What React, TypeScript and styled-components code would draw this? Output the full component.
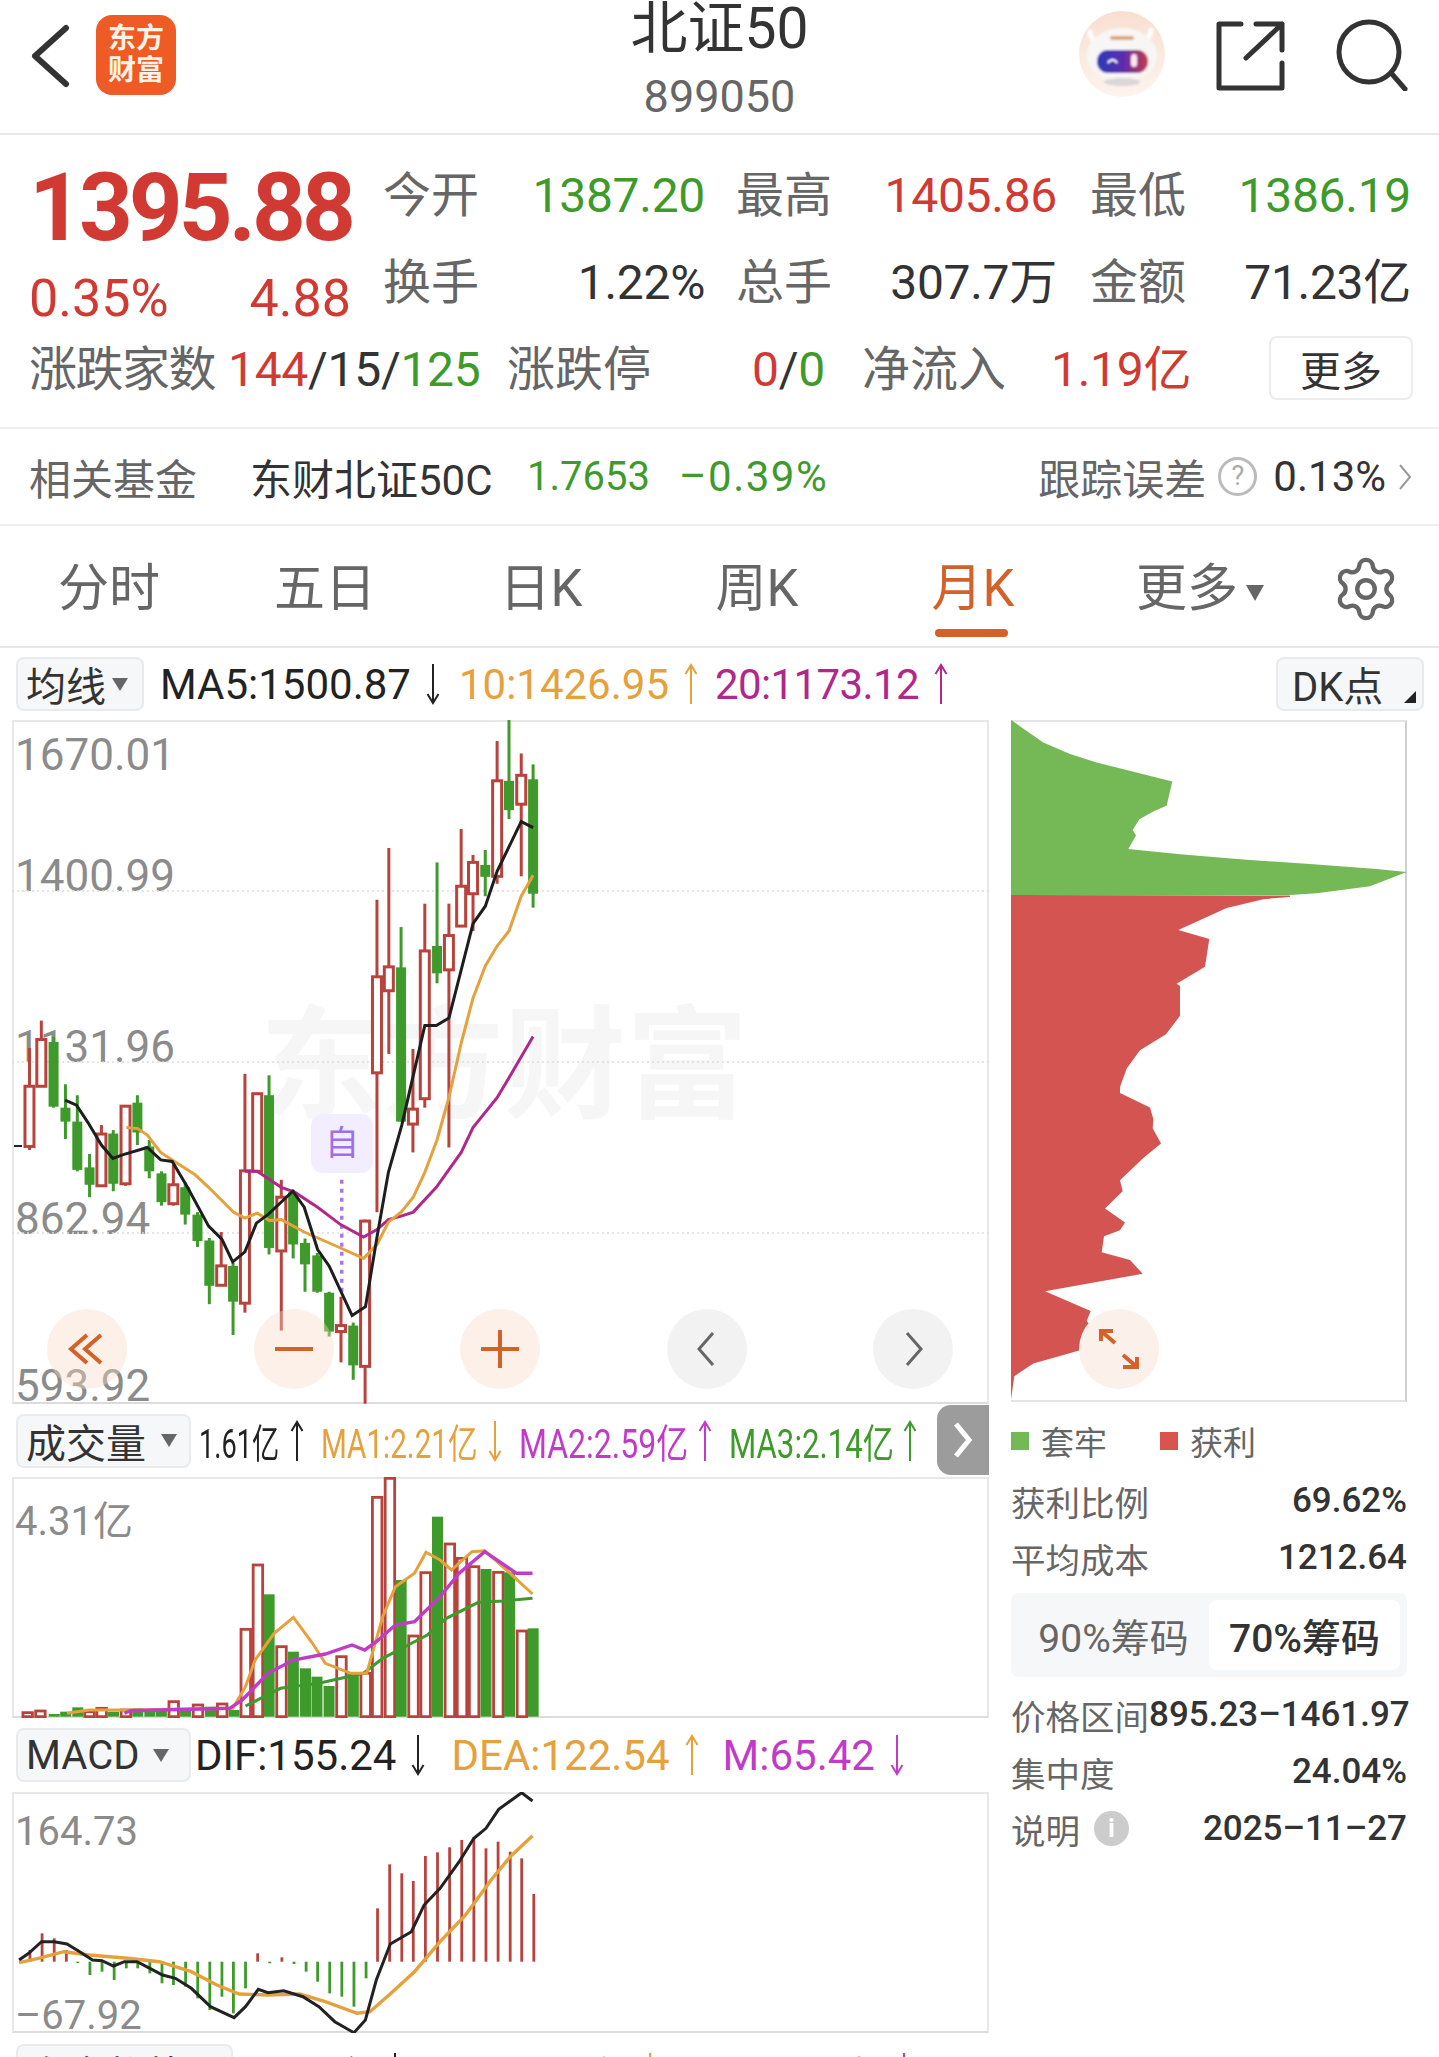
import React from "react";
import styled, { createGlobalStyle } from "styled-components";
import { Settings } from "lucide-react";

const RED = "#d13a33";
const GREEN = "#3f9a2c";
const CANDLE_RED = "#b8423c";
const ORANGE = "#e5a13c";
const MAGENTA = "#b0288a";
const VIOLET = "#c03cc8";
const FONT = `Roboto, "Noto Sans CJK SC", sans-serif`;

// [x, wickTop, wickBottom, bodyTop, bodyBottom, isRed]
const candles: [number, number, number, number, number, number][] = [
  [77, 820, 1025, 897, 1018, 1], [108, 765, 897, 803, 897, 1], [140, 798, 940, 808, 938, 0],
  [171, 893, 1003, 940, 968, 0], [202, 915, 1068, 968, 1065, 0], [234, 1033, 1120, 1060, 1095, 0],
  [265, 975, 1097, 993, 1097, 1], [296, 985, 1108, 992, 1093, 0], [328, 935, 1097, 937, 1093, 1],
  [359, 915, 1015, 930, 990, 0], [390, 1005, 1082, 1018, 1068, 0], [422, 1068, 1137, 1072, 1130, 0],
  [453, 1055, 1137, 1095, 1133, 1], [484, 1090, 1175, 1100, 1155, 0], [516, 1150, 1220, 1155, 1208, 0],
  [547, 1202, 1335, 1207, 1298, 0], [578, 1190, 1297, 1258, 1297, 1], [609, 1252, 1397, 1258, 1330, 0],
  [640, 872, 1352, 1067, 1333, 1], [672, 910, 1068, 912, 1068, 1], [703, 875, 1235, 915, 1222, 0],
  [735, 1085, 1388, 1120, 1228, 1], [766, 1105, 1243, 1110, 1215, 0], [797, 1203, 1310, 1212, 1255, 0],
  [829, 1232, 1312, 1237, 1310, 0], [860, 1310, 1400, 1312, 1390, 0], [891, 1320, 1452, 1378, 1390, 1],
  [923, 1372, 1487, 1378, 1458, 0], [954, 1165, 1535, 1168, 1460, 1], [985, 522, 1150, 677, 870, 1],
  [1016, 418, 832, 657, 705, 1], [1048, 577, 968, 658, 968, 0], [1079, 822, 1030, 943, 973, 1],
  [1110, 530, 940, 625, 922, 1], [1142, 447, 690, 615, 670, 0], [1173, 530, 1020, 594, 663, 1],
  [1205, 380, 577, 495, 575, 1], [1236, 432, 585, 447, 510, 1], [1268, 422, 515, 452, 476, 0],
  [1299, 203, 490, 283, 475, 1], [1330, 160, 360, 283, 342, 0], [1362, 228, 475, 272, 330, 1],
  [1393, 250, 538, 280, 510, 0],
];

const ma5 = [[170,925],[200,935],[230,970],[265,1015],[295,1042],[320,1035],[385,1020],[420,1045],[450,1048],[490,1100],[545,1178],[580,1205],[608,1250],[640,1230],[670,1172],[700,1155],[765,1108],[795,1140],[830,1225],[860,1258],[920,1358],[955,1340],[985,1200],[1015,1070],[1050,975],[1110,775],[1140,775],[1173,760],[1236,570],[1268,535],[1299,465],[1362,365],[1393,377]];
const ma10 = [[330,980],[360,982],[385,995],[420,1030],[460,1050],[510,1075],[545,1100],[610,1150],[640,1162],[672,1152],[705,1167],[735,1165],[795,1190],[890,1222],[950,1243],[985,1215],[1015,1170],[1048,1150],[1080,1120],[1110,1070],[1142,1005],[1173,920],[1205,810],[1236,720],[1268,655],[1299,615],[1330,585],[1362,515],[1393,473]];
const ma20 = [[640,1068],[672,1068],[735,1100],[770,1110],[830,1140],[890,1175],[950,1200],[985,1185],[1015,1165],[1048,1158],[1080,1150],[1140,1100],[1205,1030],[1236,980],[1299,920],[1330,880],[1393,797]];

// [x, top, isRed]
const volBars: [number, number, number][] = [
  [43,938,1],[63,933,1],[85,942,0],[103,935,0],[122,922,0],[140,935,1],[159,925,1],[178,935,0],[197,930,1],
  [216,925,0],[235,930,0],[253,930,0],[272,905,1],[291,925,0],[310,915,1],[330,920,0],[348,912,1],[367,930,0],
  [385,688,1],[404,495,1],[422,583,0],[441,740,1],[460,755,0],[479,805,0],[497,830,0],[516,858,0],[535,770,1],
  [554,820,0],[573,820,1],[591,292,1],[611,235,1],[629,540,0],[648,708,1],[667,518,1],[686,350,0],[705,432,1],
  [724,475,1],[743,500,1],[762,507,0],[781,517,1],[799,517,0],[818,693,1],[836,685,0],
];
const volMa1 = [[105,940],[140,930],[200,930],[365,925],[385,860],[400,780],[430,700],[460,652],[490,730],[510,790],[550,820],[575,820],[600,650],[620,560],[650,520],[668,457],[690,480],[708,510],[740,455],[760,452],[800,520],[835,582]];
const volMa2 = [[195,940],[205,932],[360,925],[380,900],[420,820],[460,780],[510,762],[552,735],[572,750],[590,725],[620,675],[650,665],[690,590],[720,520],[760,455],[810,520],[835,520]];
const volMa3 = [[385,918],[440,865],[500,850],[570,820],[600,775],[640,735],[670,705],[700,655],[750,607],[790,603],[835,595]];

// [x, tip]; above the 725 baseline is red, below is green
const macdBars = [[47,690],[66,640],[85,655],[104,690],[122,729],[141,765],[160,755],[179,780],[198,745],[216,745],[235,760],[254,790],[272,795],[291,800],[310,835],[329,870],[348,830],[366,880],[385,805],[404,700],[423,730],[442,712],[461,732],[480,755],[498,785],[517,820],[536,830],[555,860],[574,775],[592,565],[611,433],[630,460],[648,483],[667,408],[686,397],[705,382],[724,360],[743,352],[762,385],[781,365],[800,395],[818,415],[837,522]];
const dif = [[30,720],[45,700],[65,665],[85,665],[105,672],[125,695],[145,720],[160,722],[178,738],[195,725],[215,725],[235,745],[255,765],[275,775],[300,805],[330,860],[367,893],[385,860],[405,808],[420,818],[445,812],[475,830],[500,860],[525,905],[555,938],[573,900],[590,780],[612,672],[645,635],[665,555],[690,505],[720,425],[743,355],[762,325],[782,268],[818,218],[835,243]];
const dea = [[30,728],[60,715],[100,695],[140,705],[200,715],[250,725],[300,755],[340,795],[375,822],[420,825],[470,822],[510,845],[560,880],[580,875],[610,825],[650,755],[690,665],[730,585],[770,480],[800,410],[835,347]];

const profileGreen = [[92,45],[190,95],[270,120],[350,138],[577,180],[560,232],[520,245],[478,262],[458,285],[468,297],[445,327],[600,338],[800,350],[1000,360],[1190,370],[1280,377],[1170,408],[1010,423],[930,427],[92,427]];
const profileRed = [[92,427],[930,428],[930,431],[850,436],[740,455],[595,503],[688,523],[675,583],[590,620],[600,625],[600,690],[558,730],[480,765],[440,805],[420,845],[420,858],[510,890],[520,915],[518,935],[543,968],[490,1000],[420,1048],[428,1072],[375,1110],[435,1140],[420,1157],[372,1170],[365,1205],[450,1222],[488,1252],[195,1290],[332,1333],[320,1355],[345,1378],[305,1395],[303,1418],[160,1447],[103,1475],[92,1530]];

const mainX = (z: number) => z / 2.613 - 12;
const mainY = (z: number) => z / 2.01 - 80;
const lowX = (z: number) => z / 1.568 - 12;
const volY = (z: number) => z / 3 - 77;
const macdY = (z: number) => z / 3 - 72;
const profX = (z: number) => z / 3 - 31;
const profY = (z: number) => z / 2.178 - 21;

const toPoints = (pts: number[][], fx: (n: number) => number, fy: (n: number) => number) =>
  pts.map(([x, y]) => `${fx(x).toFixed(1)},${fy(y).toFixed(1)}`).join(" ");

const GlobalStyle = createGlobalStyle`
  html, body {
    margin: 0;
    padding: 0;
    background: #fff;
  }
  * {
    box-sizing: border-box;
  }
`;

const Page = styled.div`
  width: 1439px;
  height: 2057px;
  overflow: hidden;
  background: #fff;
  color: #333;
  font-family: ${FONT};
`;

const Header = styled.header`
  height: 135px;
  display: grid;
  grid-template-columns: 1fr auto 1fr;
  border-bottom: 2px solid #e8e8e8;
`;

const HeaderLeft = styled.div`
  display: flex;
  align-items: flex-start;
  padding: 15px 0 0 30px;
  gap: 26px;
`;

const Logo = styled.div`
  width: 80px;
  height: 80px;
  border-radius: 16px;
  background: #ee5b25;
  color: #fff3e8;
  font-size: 28px;
  font-weight: 700;
  line-height: 32px;
  text-align: center;
  padding-top: 8px;
`;

const TitleBlock = styled.div`
  display: flex;
  flex-direction: column;
  align-items: center;
  padding-top: 2px;
`;

const Title = styled.div`
  font-size: 57px;
  line-height: 54px;
  color: #333;
`;

const Code = styled.div`
  margin-top: 21px;
  font-size: 45px;
  line-height: 40px;
  color: #666;
`;

const HeaderRight = styled.div`
  display: flex;
  justify-content: flex-end;
  align-items: flex-start;
  padding: 10px 31px 0 0;
  gap: 50px;
`;

const IconSlot = styled.div<{ $top: number }>`
  margin-top: ${(p) => p.$top}px;
  line-height: 0;
`;

const Quote = styled.section`
  height: 294px;
  padding-top: 17px;
  border-bottom: 2px solid #efefef;
`;

const QuoteTop = styled.div`
  height: 174px;
  display: grid;
  grid-template-columns: 383px 322px 31px 321px 33px 321px;
  grid-template-rows: 87px 87px;
  align-items: center;
`;

const PriceBlock = styled.div`
  grid-row: 1 / 3;
  grid-column: 1;
  padding-left: 29px;
  align-self: start;
`;

const Price = styled.div`
  font-size: 94px;
  line-height: 112px;
  font-weight: 700;
  letter-spacing: -4px;
  color: ${RED};
`;

const Change = styled.div`
  width: 322px;
  display: flex;
  justify-content: space-between;
  font-size: 52px;
  line-height: 70px;
  color: ${RED};
`;

const Stat = styled.div`
  display: flex;
  justify-content: space-between;
  align-items: center;
`;

const Label = styled.span`
  font-size: 48px;
  line-height: 56px;
  color: #666;
  white-space: nowrap;
`;

const TightLabel = styled(Label)`
  letter-spacing: -1.5px;
`;

const Value = styled.span<{ $color?: string }>`
  font-size: 48px;
  line-height: 56px;
  letter-spacing: -0.3px;
  white-space: nowrap;
  color: ${(p) => p.$color || "#333"};
`;

const QuoteBottom = styled.div`
  height: 87px;
  padding-left: 29px;
  display: grid;
  grid-template-columns: 199px 279px 245px 110px 189px 218px 144px;
  align-items: center;
`;

const MoreButton = styled.div`
  height: 64px;
  margin-top: -4px;
  border: 2px solid #ececec;
  border-radius: 8px;
  display: flex;
  align-items: center;
  justify-content: center;
  font-size: 41px;
  color: #333;
`;

const FundRow = styled.section`
  height: 97px;
  padding-left: 29px;
  display: grid;
  grid-template-columns: 221px 277px 152px 1fr auto;
  align-items: center;
  border-bottom: 2px solid #efefef;
  font-size: 42px;
`;

const FundLabel = styled.span`
  color: #666;
  white-space: nowrap;
`;

const FundName = styled.span`
  color: #333;
  white-space: nowrap;
`;

const FundNum = styled.span<{ $color: string; $wide?: boolean }>`
  color: ${(p) => p.$color};
  font-size: ${(p) => (p.$wide ? 42 : 40)}px;
  letter-spacing: ${(p) => (p.$wide ? 1.5 : 0)}px;
  white-space: nowrap;
`;

const FundRight = styled.div`
  display: flex;
  align-items: center;
  padding-right: 27px;
`;

const HelpCircle = styled.span`
  width: 39px;
  height: 39px;
  margin: 0 16px 0 12px;
  border: 3px solid #bbb;
  border-radius: 50%;
  color: #aaa;
  font-size: 27px;
  line-height: 33px;
  text-align: center;
`;

const Tabs = styled.nav`
  height: 122px;
  padding: 6px 0 0 1px;
  display: grid;
  grid-template-columns: repeat(6, 216px) 1fr;
  align-items: center;
  border-bottom: 2px solid #e8e8e8;
`;

const Tab = styled.div<{ $active?: boolean; $shift?: number }>`
  position: relative;
  justify-self: center;
  margin-left: ${(p) => p.$shift || 0}px;
  font-size: 51px;
  line-height: 60px;
  white-space: nowrap;
  color: ${(p) => (p.$active ? "#d2622a" : "#666")};
  &::after {
    content: "";
    display: ${(p) => (p.$active ? "block" : "none")};
    position: absolute;
    left: 3px;
    right: 7px;
    top: 70px;
    height: 8px;
    border-radius: 4px;
    background: #d2622a;
  }
`;

const TabCaret = styled.span`
  display: inline-block;
  margin-left: 8px;
  vertical-align: middle;
  border-left: 9px solid transparent;
  border-right: 9px solid transparent;
  border-top: 16px solid #666;
`;

const GearSlot = styled.div`
  justify-self: center;
  line-height: 0;
  margin-left: -4px;
`;

const MaRow = styled.div`
  height: 72px;
  padding-left: 16px;
  display: flex;
  align-items: center;
  font-size: 42px;
`;

const DropButton = styled.div<{ $w: number; $h?: number }>`
  flex: none;
  width: ${(p) => p.$w}px;
  height: ${(p) => p.$h || 54}px;
  padding-left: 8px;
  display: flex;
  align-items: center;
  gap: 6px;
  background: #f6f7f9;
  border: 2px solid #e9eaec;
  border-radius: 8px;
  font-size: 40px;
  color: #333;
  white-space: nowrap;
`;

const SmallCaret = styled.span<{ $push?: number }>`
  margin-left: ${(p) => p.$push || 0}px;
  border-left: 8px solid transparent;
  border-right: 8px solid transparent;
  border-top: 13px solid #666;
`;

const DkButton = styled(DropButton)`
  position: relative;
  margin-left: auto;
  margin-right: 15px;
  padding-left: 14px;
  &::after {
    content: "";
    position: absolute;
    right: 6px;
    bottom: 6px;
    border-left: 12px solid transparent;
    border-bottom: 12px solid #222;
  }
`;

const MaText = styled.span<{ $color?: string; $gap?: number; $tight?: number }>`
  flex: none;
  display: flex;
  align-items: center;
  margin-left: ${(p) => p.$gap ?? 18}px;
  letter-spacing: ${(p) => p.$tight || 0}px;
  color: ${(p) => p.$color || "#222"};
  white-space: nowrap;
`;

const ChartArea = styled.div`
  display: grid;
  grid-template-columns: 989px 1fr;
`;

const LeftCol = styled.div`
  padding-left: 12px;
`;

const Frame = styled.div<{ $h: number }>`
  position: relative;
  width: 977px;
  height: ${(p) => p.$h}px;
  border: 2px solid #e8e8e8;
  border-bottom-color: #dcdcdc;
`;

const FrameSvg = styled.svg`
  position: absolute;
  left: -2px;
  top: -2px;
  z-index: 2;
`;

const AxisLabel = styled.span<{ $top: number; $size?: number }>`
  position: absolute;
  left: 1px;
  top: ${(p) => p.$top}px;
  z-index: 1;
  font-size: ${(p) => p.$size || 44}px;
  line-height: 44px;
  color: #8b8b8b;
  white-space: nowrap;
`;

const Watermark = styled.div`
  position: absolute;
  left: 246px;
  top: 280px;
  font-size: 122px;
  line-height: 130px;
  font-weight: 700;
  color: #f6f6f6;
  white-space: nowrap;
`;

const SelfBadge = styled.div`
  position: absolute;
  left: 297px;
  top: 392px;
  z-index: 3;
  width: 62px;
  height: 59px;
  border-radius: 12px;
  background: #f3eeff;
  color: #a06ee8;
  font-size: 34px;
  line-height: 59px;
  text-align: center;
`;

const ControlBar = styled.div`
  position: absolute;
  left: 33px;
  top: 587px;
  z-index: 3;
  display: flex;
  gap: 126.5px;
`;

const RoundButton = styled.div<{ $gray?: boolean }>`
  width: 80px;
  height: 80px;
  border-radius: 50%;
  display: flex;
  align-items: center;
  justify-content: center;
  background: ${(p) => (p.$gray ? "rgba(232, 232, 232, 0.55)" : "rgba(247, 218, 198, 0.4)")};
`;

const ExpandButton = styled(RoundButton)`
  position: absolute;
  left: 68px;
  top: 587px;
  background: #fbf0ea;
`;

const SubRow = styled.div<{ $h: number }>`
  position: relative;
  height: ${(p) => p.$h}px;
  padding-left: 4px;
  display: flex;
  align-items: center;
  font-size: 42px;
`;

const Squeezed = styled.span<{ $w: number; $gap: number; $color?: string }>`
  flex: none;
  display: flex;
  align-items: center;
  width: ${(p) => p.$w}px;
  margin-left: ${(p) => p.$gap}px;
  font-size: 40px;
  color: ${(p) => p.$color || "#222"};
  white-space: nowrap;
`;

const SqueezeInner = styled.span<{ $s: number }>`
  display: inline-block;
  transform: scaleX(${(p) => p.$s});
  transform-origin: left center;
`;

const MoreTab = styled.div`
  position: absolute;
  right: 0;
  top: 1px;
  width: 52px;
  height: 70px;
  border-radius: 14px 0 0 14px;
  background: #9c9c9c;
  display: flex;
  align-items: center;
  justify-content: center;
`;

const RightCol = styled.aside`
  padding-left: 22px;
  width: 418px;
`;

const ProfileBox = styled.div`
  position: relative;
  width: 396px;
  height: 682px;
  border: 2px solid #e4e4e4;
  border-left: 0;
  border-right-color: #cfcfcf;
`;

const ProfileSvg = styled.svg`
  position: absolute;
  left: 0;
  top: -2px;
`;

const Legend = styled.div`
  margin-top: 7px;
  height: 63px;
  display: flex;
  align-items: center;
  font-size: 33px;
  color: #666;
`;

const LegendDot = styled.span<{ $color: string; $gap?: number }>`
  width: 18px;
  height: 18px;
  margin-left: ${(p) => p.$gap || 0}px;
  margin-right: 12px;
  background: ${(p) => p.$color};
`;

const InfoRow = styled.div`
  height: 57px;
  display: flex;
  align-items: center;
  justify-content: space-between;
  width: 396px;
`;

const InfoLabel = styled.span`
  display: flex;
  align-items: center;
  font-size: 34.5px;
  color: #666;
  white-space: nowrap;
`;

const InfoValue = styled.span`
  font-size: 35px;
  font-weight: 500;
  color: #333;
  white-space: nowrap;
`;

const Toggle = styled.div`
  width: 396px;
  height: 84px;
  margin: 7px 0 9px;
  padding: 7px;
  display: grid;
  grid-template-columns: 1fr 191px;
  background: #f6f7f9;
  border-radius: 8px;
  font-size: 39px;
`;

const ToggleItem = styled.div<{ $active?: boolean }>`
  display: flex;
  align-items: center;
  justify-content: center;
  border-radius: 8px;
  background: ${(p) => (p.$active ? "#fff" : "transparent")};
  color: ${(p) => (p.$active ? "#333" : "#666")};
  font-weight: ${(p) => (p.$active ? 500 : 400)};
`;

const InfoDot = styled.span`
  width: 35px;
  height: 35px;
  margin-left: 14px;
  border-radius: 50%;
  background: #ccc;
  color: #fff;
  font-size: 26px;
  font-weight: 700;
  line-height: 35px;
  text-align: center;
`;

const ArrowSvg = styled.svg`
  display: block;
  flex: none;
`;

const Arrow = ({ up, color = "#222" }: { up?: boolean; color?: string }) => (
  <ArrowSvg width="16" height="44" viewBox="0 0 16 44">
    {up ? (
      <path d="M8 42V3M2.5 12L8 3l5.5 9" fill="none" stroke={color} strokeWidth="2" />
    ) : (
      <path d="M8 2v39M2.5 32L8 41l5.5-9" fill="none" stroke={color} strokeWidth="2" />
    )}
  </ArrowSvg>
);

const Robot = () => (
  <svg width="88" height="88" viewBox="0 0 88 88">
    <defs>
      <linearGradient id="visor" x1="0" x2="1" y1="0" y2="0">
        <stop offset="0" stopColor="#2a3db8" />
        <stop offset="0.5" stopColor="#5c2cb0" />
        <stop offset="1" stopColor="#c63a4c" />
      </linearGradient>
      <linearGradient id="halo" x1="0" x2="0" y1="0" y2="1">
        <stop offset="0" stopColor="#f8dfd0" />
        <stop offset="1" stopColor="#fdf4ee" />
      </linearGradient>
      <filter id="soft">
        <feGaussianBlur stdDeviation="0.8" />
      </filter>
    </defs>
    <circle cx="44" cy="44" r="43" fill="url(#halo)" />
    <g filter="url(#soft)">
      <path d="M12 22c1 7 4 11 10 13M73 20c-1 7-4 11-10 13" fill="none" stroke="#fff" strokeWidth="5" strokeLinecap="round" />
      <ellipse cx="44" cy="45" rx="35" ry="27" fill="#f8f6f5" />
      <ellipse cx="44" cy="72" rx="18" ry="4" fill="#dad7d5" />
      <rect x="32" y="26" width="24" height="4" rx="2" fill="#dca67c" />
      <rect x="19" y="40" width="51" height="23" rx="11" fill="url(#visor)" />
      <path d="M30 53c2-4 7-4 9 0" fill="none" stroke="#fff" strokeWidth="2" />
      <rect x="53" y="44" width="6" height="13" rx="3" fill="#ffe6ee" />
    </g>
  </svg>
);

const Candles = () => (
  <FrameSvg width="977" height="684">
    <g stroke="#ddd" strokeWidth="1.5" strokeDasharray="2 3">
      <line x1="0" x2="977" y1="171" y2="171" />
      <line x1="0" x2="977" y1="342" y2="342" />
      <line x1="0" x2="977" y1="513" y2="513" />
    </g>
    <line x1="2" x2="10" y1="426" y2="426" stroke="#222" strokeWidth="2" />
    {candles.map(([x, wt, wb, bt, bb, red]) => {
      const color = red ? CANDLE_RED : GREEN;
      const cx = mainX(x);
      return (
        <g key={x}>
          <line x1={cx} x2={cx} y1={mainY(wt)} y2={mainY(wb)} stroke={color} strokeWidth="3" />
          {red ? (
            <rect x={cx - 4.5} y={mainY(bt)} width="9" height={Math.max(mainY(bb) - mainY(bt), 2)} fill="#fff" stroke={color} strokeWidth="3" />
          ) : (
            <rect x={cx - 5} y={mainY(bt)} width="10" height={mainY(bb) - mainY(bt)} fill={color} />
          )}
        </g>
      );
    })}
    <line x1={mainX(893)} x2={mainX(893)} y1={mainY(1085)} y2={mainY(1320)} stroke="#a878ea" strokeWidth="3.5" strokeDasharray="4 5" />
    <polyline points={toPoints(ma20, mainX, mainY)} fill="none" stroke={MAGENTA} strokeWidth="3" />
    <polyline points={toPoints(ma10, mainX, mainY)} fill="none" stroke={ORANGE} strokeWidth="3" />
    <polyline points={toPoints(ma5, mainX, mainY)} fill="none" stroke="#1e1e1e" strokeWidth="3" />
  </FrameSvg>
);

const Volume = () => (
  <FrameSvg width="977" height="241">
    {volBars.map(([x, top, red]) => {
      const cx = lowX(x);
      const y = volY(top);
      const bottom = volY(950);
      return red ? (
        <rect key={x} x={cx - 4.5} y={y} width="9.5" height={bottom - y} fill="#fff" stroke={CANDLE_RED} strokeWidth="2.8" />
      ) : (
        <rect key={x} x={cx - 5.5} y={y} width="11" height={bottom - y} fill={GREEN} />
      );
    })}
    <polyline points={toPoints(volMa3, lowX, volY)} fill="none" stroke={GREEN} strokeWidth="3" />
    <polyline points={toPoints(volMa1, lowX, volY)} fill="none" stroke={ORANGE} strokeWidth="3" />
    <polyline points={toPoints(volMa2, lowX, volY)} fill="none" stroke={VIOLET} strokeWidth="3.4" />
  </FrameSvg>
);

const Macd = () => (
  <FrameSvg width="977" height="241">
    {macdBars.map(([x, tip]) => (
      <line key={x} x1={lowX(x)} x2={lowX(x)} y1={macdY(725)} y2={macdY(tip)} stroke={tip < 725 ? CANDLE_RED : GREEN} strokeWidth="2.8" />
    ))}
    <polyline points={toPoints(dea, lowX, macdY)} fill="none" stroke={ORANGE} strokeWidth="3.4" />
    <polyline points={toPoints(dif, lowX, macdY)} fill="none" stroke="#222" strokeWidth="3" />
  </FrameSvg>
);

const OrangeIcon = ({ d }: { d: string }) => (
  <svg width="44" height="44" viewBox="0 0 44 44">
    <path d={d} fill="none" stroke="#d2622a" strokeWidth="4" />
  </svg>
);

export default function App() {
  return (
    <Page>
      <GlobalStyle />
      <Header>
        <HeaderLeft>
          <IconSlot $top={8}>
            <svg width="40" height="66" viewBox="0 0 40 66">
              <path d="M36 5L5 33l31 28" fill="none" stroke="#333" strokeWidth="6" strokeLinecap="round" strokeLinejoin="round" />
            </svg>
          </IconSlot>
          <Logo>
            东方
            <br />
            财富
          </Logo>
        </HeaderLeft>
        <TitleBlock>
          <Title>北证50</Title>
          <Code>899050</Code>
        </TitleBlock>
        <HeaderRight>
          <Robot />
          <IconSlot $top={11}>
            <svg width="70" height="70" viewBox="0 0 70 70">
              <path d="M25 3H3v64h63V42M30 37L66 3M40 3h26v26" fill="none" stroke="#333" strokeWidth="5" strokeLinecap="round" strokeLinejoin="round" />
            </svg>
          </IconSlot>
          <IconSlot $top={9}>
            <svg width="72" height="72" viewBox="0 0 72 72">
              <circle cx="33" cy="33" r="30" fill="none" stroke="#333" strokeWidth="5" />
              <path d="M56 55l13 15" fill="none" stroke="#333" strokeWidth="5" strokeLinecap="round" />
            </svg>
          </IconSlot>
        </HeaderRight>
      </Header>

      <Quote>
        <QuoteTop>
          <PriceBlock>
            <Price>1395.88</Price>
            <Change>
              <span>0.35%</span>
              <span>4.88</span>
            </Change>
          </PriceBlock>
          <Stat style={{ gridColumn: 2 }}>
            <Label>今开</Label>
            <Value $color={GREEN}>1387.20</Value>
          </Stat>
          <Stat style={{ gridColumn: 4 }}>
            <Label>最高</Label>
            <Value $color={RED}>1405.86</Value>
          </Stat>
          <Stat style={{ gridColumn: 6 }}>
            <Label>最低</Label>
            <Value $color={GREEN}>1386.19</Value>
          </Stat>
          <Stat style={{ gridColumn: 2 }}>
            <Label>换手</Label>
            <Value>1.22%</Value>
          </Stat>
          <Stat style={{ gridColumn: 4 }}>
            <Label>总手</Label>
            <Value>307.7万</Value>
          </Stat>
          <Stat style={{ gridColumn: 6 }}>
            <Label>金额</Label>
            <Value>71.23亿</Value>
          </Stat>
        </QuoteTop>
        <QuoteBottom>
          <TightLabel>涨跌家数</TightLabel>
          <Value>
            <Value $color={RED}>144</Value>/15/<Value $color={GREEN}>125</Value>
          </Value>
          <Label>涨跌停</Label>
          <Value>
            <Value $color={RED}>0</Value>/<Value $color={GREEN}>0</Value>
          </Value>
          <Label>净流入</Label>
          <Value $color={RED}>1.19亿</Value>
          <MoreButton>更多</MoreButton>
        </QuoteBottom>
      </Quote>

      <FundRow>
        <FundLabel>相关基金</FundLabel>
        <FundName>东财北证50C</FundName>
        <FundNum $color={GREEN}>1.7653</FundNum>
        <FundNum $color={GREEN} $wide>
          –0.39%
        </FundNum>
        <FundRight>
          <FundLabel>跟踪误差</FundLabel>
          <HelpCircle>?</HelpCircle>
          <FundName>0.13%</FundName>
          <svg width="14" height="30" viewBox="0 0 14 30" style={{ marginLeft: 12 }}>
            <path d="M2 3l10 12L2 27" fill="none" stroke="#999" strokeWidth="2" />
          </svg>
        </FundRight>
      </FundRow>

      <Tabs>
        <Tab>分时</Tab>
        <Tab>五日</Tab>
        <Tab>日K</Tab>
        <Tab>周K</Tab>
        <Tab $active>月K</Tab>
        <Tab $shift={22}>
          更多
          <TabCaret />
        </Tab>
        <GearSlot>
          <Settings size={70} color="#666" strokeWidth={1.5} />
        </GearSlot>
      </Tabs>

      <MaRow>
        <DropButton $w={128}>
          均线
          <SmallCaret />
        </DropButton>
        <MaText $gap={16}>MA5:1500.87</MaText>
        <MaText $gap={14}>
          <Arrow />
        </MaText>
        <MaText $color={ORANGE} $gap={18}>10:1426.95</MaText>
        <MaText $gap={14}>
          <Arrow up color={ORANGE} />
        </MaText>
        <MaText $color={MAGENTA} $gap={16} $tight={-0.6}>20:1173.12</MaText>
        <MaText $gap={14}>
          <Arrow up color={MAGENTA} />
        </MaText>
        <DkButton $w={148}>DK点</DkButton>
      </MaRow>

      <ChartArea>
        <LeftCol>
          <Frame $h={684}>
            <Watermark>东方财富</Watermark>
            <AxisLabel $top={11}>1670.01</AxisLabel>
            <AxisLabel $top={132}>1400.99</AxisLabel>
            <AxisLabel $top={303}>1131.96</AxisLabel>
            <AxisLabel $top={475}>862.94</AxisLabel>
            <AxisLabel $top={642}>593.92</AxisLabel>
            <Candles />
            <SelfBadge>自</SelfBadge>
            <ControlBar>
              <RoundButton>
                <OrangeIcon d="M22 8L6 22l16 14M36 8L20 22l16 14" />
              </RoundButton>
              <RoundButton>
                <OrangeIcon d="M3 22h38" />
              </RoundButton>
              <RoundButton>
                <OrangeIcon d="M3 22h38M22 3v38" />
              </RoundButton>
              <RoundButton $gray>
                <svg width="44" height="44" viewBox="0 0 44 44">
                  <path d="M28 6L14 22l14 16" fill="none" stroke="#666" strokeWidth="3" />
                </svg>
              </RoundButton>
              <RoundButton $gray>
                <svg width="44" height="44" viewBox="0 0 44 44">
                  <path d="M16 6l14 16-14 16" fill="none" stroke="#666" strokeWidth="3" />
                </svg>
              </RoundButton>
            </ControlBar>
          </Frame>

          <SubRow $h={73}>
            <DropButton $w={175}>
              成交量
              <SmallCaret $push={9} />
            </DropButton>
            <Squeezed $w={78} $gap={8}>
              <SqueezeInner $s={0.68}>1.61亿</SqueezeInner>
            </Squeezed>
            <Squeezed $w={16} $gap={12}>
              <Arrow up />
            </Squeezed>
            <Squeezed $w={155} $gap={16} $color={ORANGE}>
              <SqueezeInner $s={0.74}>MA1:2.21亿</SqueezeInner>
            </Squeezed>
            <Squeezed $w={16} $gap={11} $color={ORANGE}>
              <Arrow color={ORANGE} />
            </Squeezed>
            <Squeezed $w={166} $gap={16} $color={VIOLET}>
              <SqueezeInner $s={0.8}>MA2:2.59亿</SqueezeInner>
            </Squeezed>
            <Squeezed $w={16} $gap={12}>
              <Arrow up color={VIOLET} />
            </Squeezed>
            <Squeezed $w={163} $gap={16} $color={GREEN}>
              <SqueezeInner $s={0.78}>MA3:2.14亿</SqueezeInner>
            </Squeezed>
            <Squeezed $w={16} $gap={10}>
              <Arrow up color={GREEN} />
            </Squeezed>
            <MoreTab>
              <svg width="24" height="40" viewBox="0 0 24 40">
                <path d="M5 4l13 16L5 36" fill="none" stroke="#fff" strokeWidth="5" />
              </svg>
            </MoreTab>
          </SubRow>

          <Frame $h={241}>
            <AxisLabel $top={21} $size={40}>4.31亿</AxisLabel>
            <Volume />
          </Frame>

          <SubRow $h={74}>
            <DropButton $w={175}>
              MACD
              <SmallCaret $push={8} />
            </DropButton>
            <MaText $gap={4}>DIF:155.24</MaText>
            <MaText $gap={14}>
              <Arrow />
            </MaText>
            <MaText $color={ORANGE} $gap={25}>DEA:122.54</MaText>
            <MaText $gap={14}>
              <Arrow up color={ORANGE} />
            </MaText>
            <MaText $color={VIOLET} $gap={23}>M:65.42</MaText>
            <MaText $gap={14}>
              <Arrow color={VIOLET} />
            </MaText>
          </SubRow>

          <Frame $h={241}>
            <AxisLabel $top={16} $size={40}>164.73</AxisLabel>
            <AxisLabel $top={200} $size={40}>–67.92</AxisLabel>
            <Macd />
          </Frame>

          <SubRow $h={80}>
            <DropButton $w={217} $h={58}>资金趋势</DropButton>
            <Squeezed $w={108} $gap={32}>
              <SqueezeInner $s={0.77}>40.30亿</SqueezeInner>
            </Squeezed>
            <Squeezed $w={16} $gap={14}>
              <Arrow />
            </Squeezed>
            <Squeezed $w={207} $gap={21} $color={ORANGE}>
              <SqueezeInner $s={0.83}>MA1:-30.75亿</SqueezeInner>
            </Squeezed>
            <Squeezed $w={16} $gap={11}>
              <Arrow color={ORANGE} />
            </Squeezed>
            <Squeezed $w={207} $gap={21} $color={VIOLET}>
              <SqueezeInner $s={0.83}>MA2:-13.41亿</SqueezeInner>
            </Squeezed>
            <Squeezed $w={16} $gap={10}>
              <Arrow color={VIOLET} />
            </Squeezed>
          </SubRow>
        </LeftCol>

        <RightCol>
          <ProfileBox>
            <ProfileSvg width="396" height="684">
              <polygon points={toPoints(profileGreen, profX, profY)} fill="#75b856" />
              <polygon points={toPoints(profileRed, profX, profY)} fill="#d35450" />
            </ProfileSvg>
            <ExpandButton>
              <OrangeIcon d="M4 14V4h12M4 4l14 12M40 30v10H26M40 40L26 28" />
            </ExpandButton>
          </ProfileBox>
          <Legend>
            <LegendDot $color="#75b856" />
            套牢
            <LegendDot $color="#d9534f" $gap={53} />
            获利
          </Legend>
          <InfoRow>
            <InfoLabel>获利比例</InfoLabel>
            <InfoValue>69.62%</InfoValue>
          </InfoRow>
          <InfoRow>
            <InfoLabel>平均成本</InfoLabel>
            <InfoValue>1212.64</InfoValue>
          </InfoRow>
          <Toggle>
            <ToggleItem>90%筹码</ToggleItem>
            <ToggleItem $active>70%筹码</ToggleItem>
          </Toggle>
          <InfoRow>
            <InfoLabel>价格区间</InfoLabel>
            <InfoValue>895.23–1461.97</InfoValue>
          </InfoRow>
          <InfoRow>
            <InfoLabel>集中度</InfoLabel>
            <InfoValue>24.04%</InfoValue>
          </InfoRow>
          <InfoRow>
            <InfoLabel>
              说明
              <InfoDot>i</InfoDot>
            </InfoLabel>
            <InfoValue>2025–11–27</InfoValue>
          </InfoRow>
        </RightCol>
      </ChartArea>
    </Page>
  );
}
